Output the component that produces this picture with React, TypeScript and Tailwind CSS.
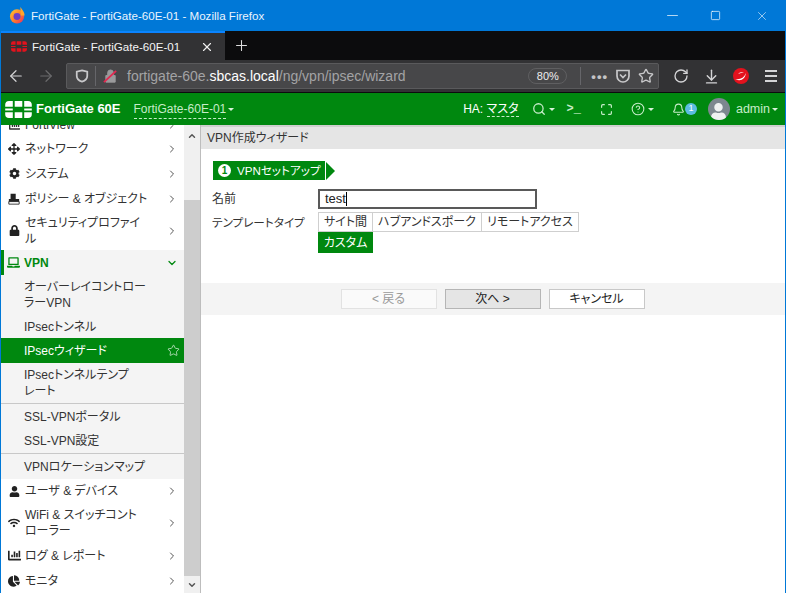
import type { ReactNode } from "react";
import {
  FaArrowsAlt,
  FaChartBar,
  FaChartPie,
  FaCog,
  FaLaptop,
  FaLock,
  FaUser,
  FaWifi,
} from "react-icons/fa";
import {
  ArrowDownToLine,
  ArrowLeft,
  ArrowRight,
  ChevronDown,
  ChevronRight,
  ChevronUp,
  Maximize,
  Minus,
  Plus,
  RotateCw,
  Search,
  Square,
  Star,
  X,
  Bell,
  CircleHelp,
} from "lucide-react";

function FortiLogo({ className, color }: { className: string; color: string }) {
  return (
    <svg viewBox="0 0 28 20" className={className} fill={color}>
      <path d="M0 7V5a4 4 0 0 1 4-4h4v6zM10 1h8v6h-8zM20 1h4a4 4 0 0 1 4 4v2h-8zM0 9h8v2H0zM20 9h8v2h-8zM0 13h8v6H4a4 4 0 0 1-4-4zM10 13h8v6h-8zM20 13h8v2a4 4 0 0 1-4 4h-4z" />
    </svg>
  );
}

function PolicyIcon() {
  return (
    <svg viewBox="0 0 14 14" className="h-[12px] w-[12px]">
      <path d="M3 1h6v6h4v5H1V7h2z" fill="#222" />
      <path d="M1 10h12v3H1z" fill="#fff" stroke="#222" strokeWidth="1" />
    </svg>
  );
}

function Caret({ className = "" }: { className?: string }) {
  return (
    <span className={`h-0 w-0 border-x-[3px] border-t-[3px] border-x-transparent border-t-[#d8f2da] ${className}`} />
  );
}

function MenuRow({
  icon,
  height,
  children,
}: {
  icon: ReactNode;
  height: string;
  children: ReactNode;
}) {
  return (
    <div className={`flex items-center pl-[6px] pr-[6px] text-[#333] ${height}`}>
      <span className="flex w-[14px] justify-center">{icon}</span>
      <span className="ml-[4px] whitespace-nowrap leading-[16px]">{children}</span>
      <ChevronRight className="ml-auto h-[12px] w-[12px] text-[#555]" strokeWidth={2} />
    </div>
  );
}

function SubRow({ height, children }: { height: string; children: ReactNode }) {
  return (
    <div className={`flex items-center whitespace-nowrap pl-[23px] leading-[16px] text-[#333] ${height}`}>
      <span>{children}</span>
    </div>
  );
}

function Sidebar() {
  return (
    <div className="flex h-[468px] w-[199px] shrink-0 overflow-hidden">
      <div className="w-[183px] shrink-0 overflow-hidden bg-white text-[12px]">
        <div className="-mt-[12px]">
          <MenuRow icon={<FaChartBar className="h-[11px] w-[11px]" />} height="h-[24px]">
            FortiView
          </MenuRow>
        </div>
        <MenuRow icon={<FaArrowsAlt className="h-[12px] w-[12px] text-[#222]" />} height="h-[24px]">
          ネットワーク
        </MenuRow>
        <MenuRow icon={<FaCog className="h-[11px] w-[11px] text-[#222]" />} height="h-[25px]">
          システム
        </MenuRow>
        <MenuRow icon={<PolicyIcon />} height="h-[25px]">
          ポリシー & オブジェクト
        </MenuRow>
        <MenuRow icon={<FaLock className="h-[11px] w-[11px] text-[#222]" />} height="h-[39px]">
          セキュリティプロファイ
          <br />ル
        </MenuRow>
        <div className="bg-[#f4f4f4]">
          <div className="flex h-[25px] items-center border-l-[3px] border-[#00880f] pl-[3px] pr-[6px] font-bold text-[#00880f]">
            <FaLaptop className="h-[13px] w-[13px]" />
            <span className="ml-[4px]">VPN</span>
            <ChevronDown className="ml-auto h-[12px] w-[12px]" strokeWidth={2.5} />
          </div>
          <SubRow height="h-[40px]">
            オーバーレイコントロー
            <br />
            ラーVPN
          </SubRow>
          <SubRow height="h-[23px]">IPsecトンネル</SubRow>
          <div className="flex h-[25px] items-center bg-[#00880f] pl-[23px] pr-[4px] text-white">
            IPsecウィザード
            <Star className="ml-auto h-[13px] w-[13px] text-[#c9e8cc]" strokeWidth={1.5} />
          </div>
          <SubRow height="h-[40px]">
            IPsecトンネルテンプ
            <br />
            レート
          </SubRow>
          <div className="border-t border-[#c8c8c8]">
            <SubRow height="h-[25px]">SSL-VPNポータル</SubRow>
            <SubRow height="h-[24px]">SSL-VPN設定</SubRow>
          </div>
          <div className="border-t border-[#c8c8c8]">
            <SubRow height="h-[25px]">VPNロケーションマップ</SubRow>
          </div>
        </div>
        <MenuRow icon={<FaUser className="h-[11px] w-[11px] text-[#222]" />} height="h-[24px]">
          ユーザ & デバイス
        </MenuRow>
        <MenuRow icon={<FaWifi className="h-[12px] w-[12px] text-[#222]" />} height="h-[40px]">
          WiFi & スイッチコント
          <br />
          ローラー
        </MenuRow>
        <MenuRow icon={<FaChartBar className="h-[13px] w-[13px] text-[#222]" />} height="h-[25px]">
          ログ & レポート
        </MenuRow>
        <MenuRow icon={<FaChartPie className="h-[12px] w-[12px] text-[#222]" />} height="h-[25px]">
          モニタ
        </MenuRow>
      </div>
      <div className="flex w-[16px] shrink-0 flex-col bg-[#cdcdcd]">
        <div className="flex h-[75px] justify-center bg-[#f0f0f0] pt-[6px]">
          <ChevronUp className="h-[10px] w-[10px] text-[#555]" strokeWidth={3.5} />
        </div>
        <div className="flex-1" />
        <div className="flex h-[17px] items-center justify-center bg-[#f0f0f0]">
          <ChevronDown className="h-[10px] w-[10px] text-[#555]" strokeWidth={3.5} />
        </div>
      </div>
    </div>
  );
}

function Wizard() {
  return (
    <div className="h-[468px] flex-1 border-l border-[#bdbdbd] bg-white text-[12px] text-[#333]">
      <div className="flex h-[24px] items-center border-t-[2px] border-[#cfcfcf] bg-[#e5e5e5] pl-[6px]">
        VPN作成ウィザード
      </div>
      <div className="mt-[12px] flex h-[19px] items-center pl-[12px]">
        <div className="flex h-[19px] w-[112px] items-center whitespace-nowrap bg-[#00880f] pl-[5px] text-white">
          <span className="flex h-[13px] w-[13px] items-center justify-center rounded-full bg-white text-[10px] font-bold text-[#00880f]">
            1
          </span>
          <span className="ml-[6px] text-[11.6px]">VPNセットアップ</span>
        </div>
        <div className="ml-[1px] h-0 w-0 border-y-[9.5px] border-l-[9px] border-y-transparent border-l-[#00880f]" />
      </div>
      <div className="mt-[9px] flex items-center pl-[11px]">
        <span className="w-[106px]">名前</span>
        <div className="flex h-[20px] w-[219px] items-center border-2 border-[#595959] pl-[5px] text-[13px] text-[#222]">
          test<span className="h-[14px] w-px bg-black" />
        </div>
      </div>
      <div className="mt-[3px] flex pl-[11px]">
        <span className="mt-[2px] w-[106px] whitespace-nowrap text-[11.6px]">テンプレートタイプ</span>
        <div className="flex w-[262px] flex-wrap">
          <div className="flex h-[20px] w-[55px] items-center justify-center border border-[#cfcfcf]">サイト間</div>
          <div className="flex h-[20px] w-[109px] items-center justify-center border border-l-0 border-[#cfcfcf]">ハブアンドスポーク</div>
          <div className="flex h-[20px] w-[97px] items-center justify-center border border-l-0 border-[#cfcfcf]">リモートアクセス</div>
          <div className="flex h-[21px] w-[55px] items-center justify-center bg-[#00880f] text-white">カスタム</div>
        </div>
      </div>
      <div className="mt-[30px] flex h-[32px] items-center justify-center gap-[8px] bg-[#f4f4f4] pr-[1px]">
        <button className="h-[20px] w-[96px] border border-[#e2e2e2] bg-[#fafafa] text-[#999]">&lt; 戻る</button>
        <button className="h-[20px] w-[96px] border border-[#b5b5b5] bg-[#e5e5e5] text-[#222]">次へ &gt;</button>
        <button className="h-[20px] w-[96px] border border-[#c8c8c8] bg-white text-[#222]">キャンセル</button>
      </div>
    </div>
  );
}

export default function App() {
  return (
    <div
      className="h-[593px] w-[786px] overflow-hidden border-x border-[#0078d7] bg-white [font-feature-settings:'palt']"
      style={{ fontFamily: '"Liberation Sans", "Noto Sans CJK JP", sans-serif' }}
    >
      {/* window title */}
      <div className="flex h-[31px] items-center bg-[#0078d7] pl-[8px] text-[11.6px] text-white">
        <svg viewBox="0 0 18 18" className="h-[17px] w-[17px]">
          <defs>
            <linearGradient id="fx" x1="0" y1="0" x2="1" y2="1">
              <stop offset="0" stopColor="#ffcb2f" />
              <stop offset="0.55" stopColor="#ff7a2b" />
              <stop offset="1" stopColor="#e5246b" />
            </linearGradient>
          </defs>
          <circle cx="8.5" cy="10" r="7.5" fill="url(#fx)" />
          <path d="M12 0c2 3 4.500 5 4.500 9h-4z" fill="#ffa62b" />
          <circle cx="8.500" cy="10" r="3.700" fill="#6b3fc9" />
        </svg>
        <span className="ml-[5px] text-[#eaf4fd]">FortiGate - FortiGate-60E-01 - Mozilla Firefox</span>
        <div className="ml-auto flex items-center text-white">
          <Minus className="mr-[29px] h-[17px] w-[17px]" strokeWidth={1} />
          <Square className="mr-[34px] h-[11px] w-[11px]" strokeWidth={1.5} />
          <X className="mr-[16px] h-[14px] w-[14px]" strokeWidth={1} />
        </div>
      </div>
      {/* tabs */}
      <div className="flex h-[29px] items-stretch bg-[#0c0c0d]">
        <div className="flex w-[224px] items-center border-t-2 border-[#0a84ff] bg-[#323234] pl-[10px] text-[11.6px] text-[#f4f4f4]">
          <FortiLogo className="h-[13px] w-[16px]" color="#e3121d" />
          <span className="ml-[5px]">FortiGate - FortiGate-60E-01</span>
          <X className="ml-auto mr-[11px] h-[14px] w-[14px] text-[#eee]" strokeWidth={2} />
        </div>
        <div className="flex w-[32px] items-center justify-center">
          <Plus className="h-[17px] w-[17px] text-[#ddd]" strokeWidth={1.5} />
        </div>
      </div>
      {/* toolbar */}
      <div className="flex h-[33px] items-center border-b border-[#0c0c0d] bg-[#323234] text-[#d4d4d6]">
        <ArrowLeft className="ml-[6px] h-[18px] w-[18px]" strokeWidth={1.6} />
        <ArrowRight className="ml-[12px] h-[18px] w-[18px] text-[#6a6a6c]" strokeWidth={1.6} />
        <div className="ml-[11px] flex h-[26px] w-[400px] flex-1 items-center rounded-[2px] border border-[#5a5a5c] bg-[#474749] text-[14px]">
          <svg viewBox="0 0 16 16" className="ml-[8px] h-[14px] w-[14px]" fill="none" stroke="#c8c8ca" strokeWidth="2">
            <path d="M8 1.500 14 3v5c0 3-3 5.500-6 6.500C5 13.500 2 11 2 8V3z" />
          </svg>
          <span className="ml-[6px] h-[20px] w-px bg-[#66666a]" />
          <svg viewBox="0 0 16 16" className="ml-[7px] h-[15px] w-[15px]">
            <path d="M3 7h10v7H3z M5 7V4a3 3 0 0 1 6 0v3" fill="#9a9a9c" stroke="#9a9a9c" />
            <path d="M1 14 14 2" stroke="#e22850" strokeWidth="2" />
          </svg>
          <span className="ml-[9px] text-[#a3a3a5]">
            fortigate-60e.<span className="text-white">sbcas.local</span>/ng/vpn/ipsec/wizard
          </span>
          <span className="ml-auto flex h-[16px] w-[39px] items-center justify-center rounded-full border border-[#5f5f61] text-[11px] text-[#eee]">
            80%
          </span>
          <span className="ml-[13px] h-[18px] w-px bg-[#66666a]" />
          <span className="ml-[10px] text-[13px] font-bold leading-none tracking-[1px] text-[#c4c4c6]">•••</span>
          <svg viewBox="0 0 16 16" className="ml-[7px] h-[16px] w-[16px]" fill="none" stroke="#c8c8ca" strokeWidth="1.700">
            <path d="M2 2.500h12V8a6 6 0 0 1-12 0z" />
            <path d="m5 6.500 3 3 3-3" />
          </svg>
          <Star className="ml-[7px] mr-[4px] h-[16px] w-[16px] text-[#c8c8ca]" strokeWidth={2} />
        </div>
        <RotateCw className="ml-[14px] h-[16px] w-[16px]" strokeWidth={2} />
        <ArrowDownToLine className="ml-[14px] h-[17px] w-[17px]" strokeWidth={2} />
        <svg viewBox="0 0 16 16" className="ml-[13px] h-[16px] w-[16px]">
          <circle cx="8" cy="8" r="8" fill="#e3121d" />
          <path d="M2 11c5 1 9-1 11-6-1 6-5 9-11 6zM5 6c2-2 4-2 6-2-2 1-4 1-6 2z" fill="#fff" />
        </svg>
        <div className="ml-[16px] mr-[8px] flex w-[12px] flex-col gap-[3px]">
          <span className="h-[2px] bg-[#d4d4d6]" />
          <span className="h-[2px] bg-[#d4d4d6]" />
          <span className="h-[2px] bg-[#d4d4d6]" />
        </div>
      </div>
      {/* fortigate header */}
      <div className="flex h-[32px] items-center bg-[#00880f] text-[12px] text-[#c6ecc9]">
        <FortiLogo className="ml-[4px] h-[19px] w-[27px]" color="#fff" />
        <span className="ml-[4px] text-[13px] font-bold text-white">FortiGate 60E</span>
        <span className="ml-[13px] border-b border-dashed border-[#c6ecc9]">FortiGate-60E-01</span>
        <Caret className="ml-[2px]" />
        <span className="ml-auto text-white">
          HA: <span className="border-b border-dashed border-[#c6ecc9]">マスタ</span>
        </span>
        <Search className="ml-[13px] h-[14px] w-[14px]" strokeWidth={2.2} />
        <Caret className="ml-[3px]" />
        <span className="ml-[12px] font-mono text-[12px] font-bold leading-none">&gt;_</span>
        <Maximize className="ml-[19px] h-[13px] w-[13px]" strokeWidth={2.2} />
        <CircleHelp className="ml-[18px] h-[14px] w-[14px]" strokeWidth={1.8} />
        <Caret className="ml-[3px]" />
        <Bell className="ml-[18px] h-[13px] w-[13px]" strokeWidth={2} />
        <span className="flex h-[12px] w-[12px] items-center justify-center rounded-full bg-[#5bbde0] text-[9px] text-white">1</span>
        <span className="ml-[11px] flex h-[22px] w-[22px] items-end justify-center overflow-hidden rounded-full bg-[#7d8790]">
          <FaUser className="h-[17px] w-[17px] text-[#eef0f1]" />
        </span>
        <span className="ml-[6px] text-[12.5px]">admin</span>
        <Caret className="ml-[2px] mr-[7px]" />
      </div>
      <div className="flex">
        <Sidebar />
        <Wizard />
      </div>
    </div>
  );
}
